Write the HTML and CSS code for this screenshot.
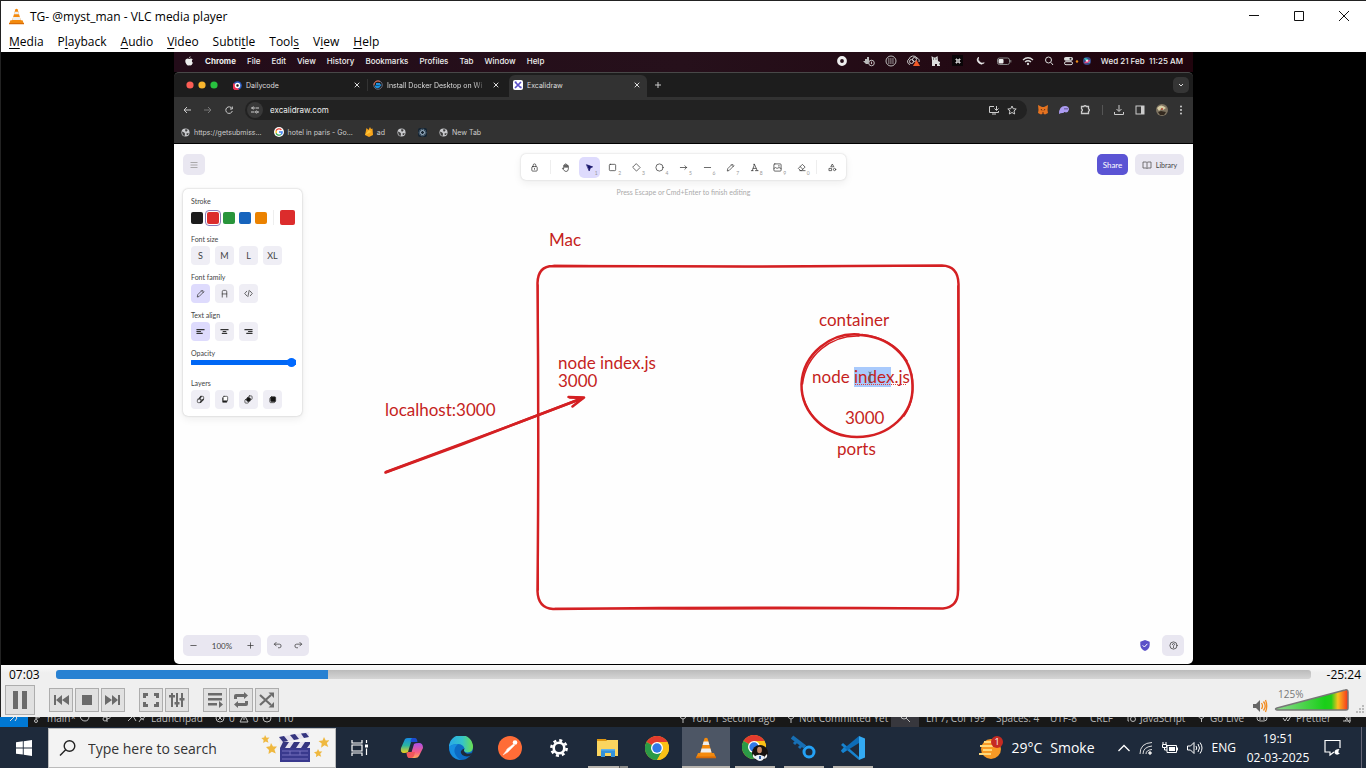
FILE: index.html
```html
<!DOCTYPE html>
<html lang="en">
<head>
<meta charset="utf-8">
<title>TG- @myst_man - VLC media player</title>
<link rel="stylesheet" href="styles.css">
</head>
<body>
<svg class="defs" width="0" height="0" aria-hidden="true">
  <symbol id="cone" viewBox="0 0 20 22"><path d="M2 16h16l2 5H0z" fill="#f08a10"/><path d="M8.400 1.500Q10 0 11.600 1.500L16 17Q10 20 4 17z" fill="#f58a0c"/><path d="M7.600 4.500h4.800l1 3.500H6.600zM5.600 11.500h8.800l1.100 4H4.500z" fill="#eee"/><path d="M0 19.500h20l.2 1.800H0z" fill="#d96b05"/></symbol>
  <symbol id="close" viewBox="0 0 8 8"><path d="M1.700 1.700l4.600 4.600M6.300 1.700L1.700 6.300" stroke="#ddd"/></symbol>
  <symbol id="globe" viewBox="0 0 10 10"><circle cx="5" cy="5" r="4.500" fill="#c8c9cc"/><path d="M1 4l2.500 1 1 1.500L4 9 2 8zM5 1.200L7.500 2 6.500 4 4.500 3.500zM6 6l2.500-.5L8 7.500 6.500 8z" fill="#3c3c3c"/></symbol>
  <symbol id="chrome" viewBox="0 0 24 24"><circle cx="12" cy="12" r="12" fill="#fbc116"/><path d="M12 12L1.600 6A12 12 0 0 1 22.400 6H12z" fill="#e33b2e"/><path d="M1.600 6A12 12 0 0 0 12 24l5.200-9L12 12z" fill="#2b9a47"/><path d="M12 6h10.400A12 12 0 0 1 12 24l5.200-9z" fill="#fbc116"/><circle cx="12" cy="12" r="6" fill="#fff"/><circle cx="12" cy="12" r="4.700" fill="#3079e8"/></symbol>
</svg>

<main class="player">
  <header class="titlebar">
    <svg class="cone-small" width="15" height="17"><use href="#cone"/></svg>
    <h1>TG- @myst_man - VLC media player</h1>
    <div class="window-buttons">
      <button aria-label="Minimize"><svg width="12" height="12"><path d="M1 5.500h10"/></svg></button>
      <button aria-label="Maximize"><svg width="12" height="12"><path d="M1.500 1.500h9v9h-9z"/></svg></button>
      <button aria-label="Close"><svg width="12" height="12"><path d="M1 1l10 10M11 1L1 11"/></svg></button>
    </div>
  </header>
  <nav class="menubar">
    <button><u>M</u>edia</button><button>P<u>l</u>ayback</button><button><u>A</u>udio</button><button><u>V</u>ideo</button><button>Subti<u>t</u>le</button><button>Tool<u>s</u></button><button>V<u>i</u>ew</button><button><u>H</u>elp</button>
  </nav>

  <section class="video">
    <div class="frame">
      <div class="mac-bar">
        <svg width="10" height="10" viewBox="0 0 10 10" fill="#eee"><path d="M6.700.3Q6.600 1.900 5 2.300 5 .9 6.700.3zM5.200 2.900q2.300-1 3.500.6-1.800 1.400.2 3.300Q7.500 10.500 5.200 9.300 3.600 10.200 2.300 8 .2 4.300 2.300 3q1.400-.8 2.900-.1z"/></svg>
        <b>Chrome</b><span>File</span><span>Edit</span><span>View</span><span>History</span><span>Bookmarks</span><span>Profiles</span><span>Tab</span><span>Window</span><span>Help</span>
        <div class="mac-status">
          <svg class="record" width="12" height="12"><circle cx="6" cy="6" r="3.400" fill="none" stroke="#eee" stroke-width="3"/></svg>
          <svg width="12" height="12"><path d="M0 6h7l2-1v4H3zM2 4h2v2H2zM4 2h2v4H4z" fill="#bbb"/><circle cx="8.500" cy="8" r="2.800" fill="#33111c" stroke="#bbb"/><path d="M8.500 6.700V9" stroke="#bbb"/></svg>
          <svg width="12" height="12" fill="none" stroke="#bbb"><circle cx="6" cy="6" r="5"/><path d="M3 4h6M3 6h6M3 8h6" stroke-dasharray="1.500 .6"/></svg>
          <svg width="13" height="12"><path d="M3 9.500a3 3 0 0 1-1-5.500 4.500 4.500 0 0 1 8-1 3 3 0 0 1 2 4" fill="none" stroke="#ccc"/><circle cx="4.500" cy="6.500" r="2" fill="none" stroke="#ccc"/><circle cx="7.500" cy="4.500" r="2" fill="none" stroke="#ccc"/><path d="M9.500 5l3.500 6H6z" fill="#f05a28"/></svg>
          <svg width="12" height="12"><path d="M2 11V5L1.500 1l2 1.500h2L7.500 1 8 6l2 1v4H7V9H5v2z" fill="#ddd"/><path d="M3 4h1M5.500 4h1M9 9h1" stroke="#222"/></svg>
          <svg width="12" height="12"><rect width="11" height="11" fill="#0a0508"/><path d="M5 5h2v2H5zM5 5H4V4h1zM7 5V4h1v1zM5 7v1H4V7zM7 7h1v1H7z" fill="none" stroke="#ddd"/></svg>
          <svg width="12" height="12"><path d="M4.500 2a4 4 0 1 0 5.800 5.800A4.500 4.500 0 0 1 4.500 2z" fill="#eee" stroke="#eee" stroke-width=".6"/></svg>
          <svg width="16" height="12"><rect x="1.500" y="3" width="12" height="6.500" rx="2" fill="none" stroke="#888"/><rect x="2.500" y="4" width="5" height="4.500" rx="1" fill="#eee"/><path d="M14.800 5v2.500" stroke="#888"/></svg>
          <svg width="12" height="12" fill="none" stroke="#ddd" stroke-width="1.300"><path d="M1 5Q6 .5 11 5M3 7q3-2.500 6 0"/><circle cx="6" cy="9" r=".5"/></svg>
          <svg width="10" height="12" fill="none" stroke="#ddd"><circle cx="4.500" cy="5" r="3"/><path d="M7 7.500l2 2.500"/></svg>
          <svg width="15" height="12"><rect y="2" width="9" height="3.700" rx="1.800" fill="#ddd"/><rect x=".5" y="6.700" width="8" height="3" rx="1.500" fill="none" stroke="#ddd"/><circle cx="6.500" cy="3.800" r="1" fill="#222"/><circle cx="13" cy="6.500" r="1.200" fill="#e88a1a"/></svg>
          <svg class="siri" width="12" height="12"><circle cx="6" cy="6" r="4" fill="#364a87"/><path d="M3 3q5 0 6 5-4 0-6-5z" fill="#3cc3c0"/><path d="M3 8q3-4 6-3-1 4-6 3z" fill="#e04a85"/><circle cx="6" cy="5.800" r="1" fill="#fff"/></svg>
          <time>Wed 21 Feb&nbsp; 11:25 AM</time>
        </div>
      </div>

      <div class="browser">
        <div class="tabs">
          <svg width="32" height="8"><circle cx="4" cy="4" r="3.600" fill="#fb5d55"/><circle cx="16" cy="4" r="3.600" fill="#f9b62d"/><circle cx="28" cy="4" r="3.600" fill="#28c13f"/></svg>
          <div class="tab first"><svg width="9" height="9"><circle cx="4.500" cy="4.500" r="4.300" fill="#295bc0"/><path d="M1 2a4 4 0 0 0 5 6.500z" fill="#ed3356"/><circle cx="4.500" cy="4.500" r="2" fill="#181818" stroke="#fff" stroke-width="1.500"/></svg><span>Dailycode</span><button aria-label="Close tab"><svg width="8" height="8"><use href="#close"/></svg></button></div>
          <div class="tab second"><svg width="10" height="10"><circle cx="5" cy="5" r="4.300" fill="none" stroke="#667" /><path d="M1 5a4 4 0 0 1 6-3.500" fill="none" stroke="#e7694a"/><path d="M1.500 5.500h5l1-1.500 1 1-1 1Q6.500 8.500 4 8.300 2 8 1.500 5.500z" fill="#1d91dd"/><path d="M3 4h4" stroke="#1d91dd" stroke-width="2"/></svg><span>Install Docker Desktop on Wi</span><button aria-label="Close tab"><svg width="8" height="8"><use href="#close"/></svg></button></div>
          <div class="tab active"><svg width="10" height="10"><rect width="10" height="10" rx="2" fill="#fff"/><path d="M2 2l6 6M8 2L2 8" stroke="#5b50c8" stroke-width="1.700"/><path d="M1.500 1.500h2v2zM6.500 6.500h2v2z" fill="#5b50c8"/></svg><span>Excalidraw</span><button aria-label="Close tab"><svg width="8" height="8"><use href="#close"/></svg></button></div>
          <button class="new-tab" aria-label="New tab"><svg width="8" height="8" stroke="#ccc"><path d="M4 1v6M1 4h6"/></svg></button>
          <button class="tab-search" aria-label="Search tabs"><svg width="8" height="8" fill="none" stroke="#ddd"><path d="M2 3l2 2 2-2"/></svg></button>
        </div>
        <div class="address-row">
          <button aria-label="Back"><svg width="10" height="10" fill="none" stroke="#ccc"><path d="M9 5H2M5 2L2 5l3 3"/></svg></button>
          <button aria-label="Forward"><svg width="10" height="10" fill="none" stroke="#777"><path d="M1 5h7M5 2l3 3-3 3"/></svg></button>
          <button aria-label="Reload"><svg width="10" height="10" fill="none" stroke="#ccc"><path d="M8 3.500A3.300 3.300 0 1 0 8.300 6M8.300 1.500V4H6"/></svg></button>
          <div class="address">
            <span class="site-info"><svg width="8" height="8" fill="none" stroke="#ccc"><path d="M4.500 2H8M0 2h1M0 6h3.500M7 6h1"/><circle cx="2.300" cy="2" r="1"/><circle cx="5.500" cy="6" r="1"/></svg></span>
            <input type="text" value="excalidraw.com" aria-label="Address">
            <svg width="12" height="10" fill="none" stroke="#ccc"><path d="M6 1.500H1.500V7.500h9V6M4 9h4M8.500 1v4M6.500 3.500l2 2 2-2"/></svg>
            <svg width="10" height="10" viewBox="0 0 10 10" fill="none" stroke="#ccc"><path d="M5 1l1.200 2.700 3 .3L7 6l.7 3L5 7.500 2.300 9 3 6 .8 4l3-.3z"/></svg>
          </div>
          <div class="extensions">
            <svg width="10" height="10"><path d="M0 0l4 2h2l4-2-.5 5L10 8 7 9.500 5 8.500 3 9.500 0 8l.5-3z" fill="#e57320"/><path d="M3 4l1 1.500M7 4L6 5.500M4 8h2" stroke="#623017"/></svg>
            <svg width="10" height="10"><path d="M0 9Q0 1 6 1q4 0 4 3.500Q9.500 7 7 7.500 5 6.500 4.500 8 2 7.500 0 9z" fill="#ac9cf2"/><path d="M6 3v1.500M8 3v1.500" stroke="#44376d"/></svg>
            <svg width="11" height="11" fill="none" stroke="#ccc" stroke-width="1.300"><path d="M1.500 2.500h2.300a1.300 1.300 0 0 1 2.500 0H8.500v2.300a1.300 1.300 0 0 1 0 2.500V9.500h-7V7.300a1.300 1.300 0 0 0 0-2.500z"/></svg>
            <i></i>
            <svg width="10" height="10" fill="none" stroke="#ccc"><path d="M5 0v6M2.500 4L5 6.500 7.500 4M.5 7v2.500h9V7"/></svg>
            <svg width="10" height="10"><rect x="1" y="1" width="8" height="8" fill="none" stroke="#ccc"/><path d="M6 1h3v8H6z" fill="#ccc"/></svg>
            <svg width="12" height="12"><circle cx="6" cy="6" r="6" fill="#7d7361"/><path d="M1 4q4-5 9 0l-3 2-2-1-2 2z" fill="#d8cda5"/><path d="M2 8l3-1 5 1-2 3H4z" fill="#33291f"/><circle cx="6" cy="5" r="1" fill="#a83b2d"/></svg>
            <svg width="4" height="10" fill="#ddd"><circle cx="2" cy="1.500" r=".9"/><circle cx="2" cy="5" r=".9"/><circle cx="2" cy="8.500" r=".9"/></svg>
          </div>
        </div>
        <div class="bookmarks">
          <a href="#"><svg width="9" height="9"><use href="#globe"/></svg>https://getsubmiss...</a>
          <a href="#"><svg width="10" height="10"><circle cx="5" cy="5" r="5" fill="#fff"/><path d="M7.400 2.800A3.200 3.200 0 0 0 2.100 3.800" fill="none" stroke="#e74435" stroke-width="1.300"/><path d="M2.100 3.800v2.400" stroke="#fbbc05" stroke-width="1.300"/><path d="M2.100 6.200A3.200 3.200 0 0 0 7 7.500" fill="none" stroke="#34a853" stroke-width="1.300"/><path d="M7 7.500A3 3 0 0 0 8.200 5H5" fill="none" stroke="#4285f4" stroke-width="1.300"/></svg>hotel in paris - Go...</a>
          <a href="#"><svg width="8" height="10"><path d="M0 8L1.500 1l2 2L5 0l1 2 1.500-.5L8 8 4 10z" fill="#f7a51b"/><path d="M0 8l4-5 2 2z" fill="#ffca3c"/></svg>ad</a>
          <a href="#" aria-label="Site"><svg width="9" height="9"><use href="#globe"/></svg></a>
          <a href="#" aria-label="Settings"><svg width="9" height="9"><rect width="9" height="9" rx="2" fill="#152432"/><circle cx="4.500" cy="4.500" r="2" fill="none" stroke="#b5cce0"/><circle cx="4.500" cy="4.500" r="3.300" fill="none" stroke="#9fb8cd" stroke-dasharray="1 1"/></svg></a>
          <a href="#"><svg width="9" height="9"><use href="#globe"/></svg>New Tab</a>
        </div>
      </div>

      <div class="board">
        <svg class="drawing" viewBox="174 144 1019 520" preserveAspectRatio="xMidYMin meet">
          <g fill="none" stroke="#d42023" stroke-width="2.500" stroke-linecap="round" stroke-linejoin="round">
            <path d="M553 266Q640 266 745 266.500L942 265.600Q958 266 958.500 284Q959 440 958 591Q958 607 943 608.500Q750 607 553 609Q538 608 537.500 591Q539 440 537.500 283Q538 266 553 266"/>
            <path d="M554 265.400L745 266.600 940 266M957.800 286L958.600 590M940 608.400L690 609 555 608.300M538.400 590L538 285" stroke-width="1.300"/>
            <path d="M859 334.500C831 332 803 354 801.500 384C801 414 827 437 857 437C889 437 914 414 912.500 385C912 356 889 336 857 334.800"/>
            <path d="M859 336C831 335 806 355 802.500 384M862 334.500Q893 338 907 361M911.500 374Q916 399 904 416M803 397Q811 424 838 434" stroke-width="1.600"/>
            <path d="M385.500 472.500L463 444 584 397.500M568.500 397L584 397.500 572.500 406.500"/>
            <path d="M386 472L520 422 582 398.500M570 397.500L583 398"/>
          </g>
          <g class="labels">
            <text x="549" y="246">Mac</text>
            <text x="819" y="326">container</text>
            <text x="558" y="369">node index.js</text>
            <text x="558" y="387">3000</text>
            <text x="385" y="416">localhost:3000</text>
            <rect x="854" y="367" width="37" height="20" fill="#a9cafc"/>
            <text x="812" y="383">node index.js</text>
            <path d="M855 384.500h52" stroke="#e04040" stroke-dasharray="1 1"/>
            <path d="M868.500 372q1.500 0 1.500 1.500v8q0 1.500-1.500 1.500M871.500 372q-1.500 0-1.500 1.500v8q0 1.500 1.500 1.500" fill="none" stroke="#555" stroke-width=".8"/>
            <text x="845" y="424">3000</text>
            <text x="837" y="455">ports</text>
          </g>
        </svg>

        <div class="board-ui">
          <div class="board-top">
            <button class="soft square" aria-label="Menu"><svg width="10" height="10" stroke="#999"><path d="M1.500 2.500h7M1.500 5h7M1.500 7.500h7" stroke-width=".8"/></svg></button>
            <div class="tool-column">
              <div class="tools">
                <button aria-label="Lock"><svg viewBox="0 0 10 10"><rect x="2" y="4" width="6" height="5" rx="1"/><path d="M3.500 4V2.500a1.500 1.500 0 0 1 3 0V4M5 6v1"/></svg></button>
                <i></i>
                <button aria-label="Hand"><svg viewBox="0 0 10 10"><path d="M3 6V2.500q.7-1 1.300 0V5 1.500q.7-1 1.300 0V5 2q.7-1 1.300 0v3-2q.8-1 1.300 0v3.500Q8 9.500 5.500 9.500 3.500 9 1.500 6 2 4.800 3 6"/></svg></button>
                <button class="selected" aria-label="Selection"><svg viewBox="0 0 10 10"><path d="M2 2l6.500 2.300-2.600 1.200L4.800 8.500z" fill="#18156b" stroke="#18156b"/></svg><sub>1</sub></button>
                <button aria-label="Rectangle"><svg viewBox="0 0 10 10"><rect x="1.500" y="1.500" width="7" height="7" rx="1"/></svg><sub>2</sub></button>
                <button aria-label="Diamond"><svg viewBox="0 0 10 10"><path d="M5 1l4 4-4 4-4-4z"/></svg><sub>3</sub></button>
                <button aria-label="Ellipse"><svg viewBox="0 0 10 10"><circle cx="5" cy="5" r="4"/></svg><sub>4</sub></button>
                <button aria-label="Arrow"><svg viewBox="0 0 10 10"><path d="M1.500 5h7M6.500 3l2 2-2 2"/></svg><sub>5</sub></button>
                <button aria-label="Line"><svg viewBox="0 0 10 10"><path d="M1.500 5h7"/></svg><sub>6</sub></button>
                <button aria-label="Draw"><svg viewBox="0 0 10 10"><path d="M1.500 8.500l.5-2.300 5-5 1.800 1.800-5 5zM6 2l2 2"/></svg><sub>7</sub></button>
                <button aria-label="Text"><svg viewBox="0 0 10 10"><path d="M1.500 8.500h2M6 8.500h3M2.500 8.500L5 1.500l3 7M3.500 6h3.300M4 1.500h1"/></svg><sub>8</sub></button>
                <button aria-label="Image"><svg viewBox="0 0 10 10"><rect x="1" y="1" width="8" height="8" rx="1"/><path d="M1 6q2-2 3.500 0 2-2 4.500 0M6 3.200h1"/></svg><sub>9</sub></button>
                <button aria-label="Eraser"><svg viewBox="0 0 10 10"><path d="M4 8.500L1.500 6l4.500-4.500L9 4.500l-4 4H3M3.500 4l3 3M5 8.500h4"/></svg><sub>0</sub></button>
                <i></i>
                <button aria-label="More tools"><svg viewBox="0 0 10 10"><path d="M5 1.500l1.500 2.700h-3zM1.500 6H4v2.500H1.500z"/><circle cx="7.300" cy="7.200" r="1.300"/></svg></button>
              </div>
              <p>Press Escape or Cmd+Enter to finish editing</p>
            </div>
            <div class="board-actions">
              <button class="share">Share</button>
              <button class="soft library"><svg width="10" height="10" fill="none" stroke="#555" stroke-width=".8"><path d="M1 2h3.500l.5.500.5-.5H9v6H5.500L5 8.500 4.500 8H1zM5 2.500v6"/></svg>Library</button>
            </div>
          </div>

          <aside class="panel">
            <fieldset><legend>Stroke</legend>
              <div class="swatches"><button class="black" aria-label="Black"></button><button class="red picked" aria-label="Red"></button><button class="green" aria-label="Green"></button><button class="blue" aria-label="Blue"></button><button class="orange" aria-label="Orange"></button><i></i><button class="red current-colour" aria-label="Current colour"></button></div>
            </fieldset>
            <fieldset><legend>Font size</legend>
              <div class="options"><button>S</button><button>M</button><button>L</button><button>XL</button></div>
            </fieldset>
            <fieldset><legend>Font family</legend>
              <div class="options"><button class="selected" aria-label="Hand-drawn"><svg viewBox="0 0 10 10"><path d="M1.500 8.500l.5-2.300 5-5 1.800 1.800-5 5zM6 2l2 2"/></svg></button><button aria-label="Normal"><svg viewBox="0 0 10 10"><path d="M2.500 9V3q0-1.500 1.500-1.500h2Q7.500 1.500 7.500 3v6M2.500 5.500h5"/></svg></button><button aria-label="Code"><svg viewBox="0 0 10 10"><path d="M3 2.500L.8 5 3 7.500M7 2.500L9.200 5 7 7.500M5.800 1.500l-1.500 7"/></svg></button></div>
            </fieldset>
            <fieldset><legend>Text align</legend>
              <div class="options bold"><button class="selected" aria-label="Left"><svg viewBox="0 0 10 10"><path d="M1 3h8M1 5h4M1 7h6"/></svg></button><button aria-label="Center"><svg viewBox="0 0 10 10"><path d="M1 3h8M3.500 5h3M2.500 7h5"/></svg></button><button aria-label="Right"><svg viewBox="0 0 10 10"><path d="M1 3h8M5 5h4M3 7h6"/></svg></button></div>
            </fieldset>
            <div class="opacity"><label for="opacity">Opacity</label><input id="opacity" type="range" value="100"></div>
            <fieldset><legend>Layers</legend>
              <div class="options"><button aria-label="Send to back"><svg viewBox="0 0 10 10"><rect x="4.500" y="1.500" width="4" height="4" rx="1"/><rect x="1.500" y="4.500" width="4" height="4" rx="1"/><path d="M4 3.500L5.500 2M5 8l3-3" stroke-width="1.600"/></svg></button><button aria-label="Send backward"><svg viewBox="0 0 10 10"><path d="M3 3.500V8h4.500L8 6H4V3z" fill="#111"/><rect x="3.500" y="1.500" width="5" height="5" rx="1" fill="#fff"/></svg></button><button aria-label="Bring forward"><svg viewBox="0 0 10 10"><rect x="5" y="1" width="4" height="4" rx="1"/><rect x="1" y="5" width="4" height="4" rx="1"/><rect x="3" y="3" width="4" height="4" rx="1" fill="#111"/></svg></button><button aria-label="Bring to front"><svg viewBox="0 0 10 10"><rect x="2" y="3" width="5.500" height="5.500" rx="1"/><rect x="3" y="2" width="5.500" height="5.500" rx="1" fill="#111"/></svg></button></div>
            </fieldset>
          </aside>

          <footer class="board-footer">
            <div class="soft zoom"><button aria-label="Zoom out"><svg viewBox="0 0 10 10"><path d="M2 5h6"/></svg></button><button>100%</button><button aria-label="Zoom in"><svg viewBox="0 0 10 10"><path d="M2 5h6M5 2v6"/></svg></button></div>
            <div class="soft history"><button aria-label="Undo"><svg viewBox="0 0 10 10"><path d="M3.500 1.500l-2 2 2 2M1.500 3.500H7a2 2 0 0 1 0 4H6"/></svg></button><button aria-label="Redo"><svg viewBox="0 0 10 10"><path d="M6.500 1.500l2 2-2 2M8.500 3.500H3a2 2 0 0 0 0 4h1"/></svg></button></div>
            <svg class="shield" width="10" height="11"><path d="M5 0l4.700 1.800V5Q9.500 9 5 11 .5 9 .3 5V1.800z" fill="#5b50c8"/><path d="M2.700 5.300l1.700 1.700 3-3.200" fill="none" stroke="#fff"/></svg>
            <button class="soft square" aria-label="Help"><svg viewBox="0 0 10 10"><circle cx="5" cy="5" r="4"/><path d="M3.800 4q0-1.200 1.200-1.200T6.200 4Q6 4.700 5 5.200V6M5 7v.5"/></svg></button>
          </footer>
        </div>
      </div>
    </div>
  </section>

  <section class="controls">
    <div class="seek-row"><time>07:03</time><input class="seek" type="range" min="0" max="1000" value="217" aria-label="Position"><time>-25:24</time></div>
    <div class="button-row">
      <button class="pause" aria-label="Pause"><svg width="18" height="20" viewBox="0 0 18 20"><path d="M2 1h5v18H2zM11 1h5v18h-5z"/></svg></button>
      <div class="group">
        <button aria-label="Previous"><svg viewBox="0 0 18 18"><path d="M2 4h2v10H2zM10 4v10L4 9zM17 4v10l-7-5z"/></svg></button>
        <button aria-label="Stop"><svg viewBox="0 0 18 18"><path d="M4 4h10v10H4z"/></svg></button>
        <button aria-label="Next"><svg viewBox="0 0 18 18"><path d="M1 4v10l7-5zM8 4v10l6-5zM14 4h2v10h-2z"/></svg></button>
      </div>
      <div class="group">
        <button aria-label="Fullscreen"><svg viewBox="0 0 18 18"><path d="M1 2h5v3H4v2H1zM12 2h5v5h-3V5h-2zM1 11h3v2h2v3H1zM14 11h3v5h-5v-3h2z"/></svg></button>
        <button aria-label="Extended settings"><svg viewBox="0 0 18 18"><path d="M3 2h2v14H3zM1 4h6v2.500H1zM8 2h2v14H8zM6.500 11h5v2.500h-5zM13 2h2v14h-2zM11.500 7h5v2.500h-5z"/></svg></button>
      </div>
      <div class="group">
        <button aria-label="Playlist"><svg viewBox="0 0 18 18"><path d="M2 2h14v2.500H2zM2 7h14v2.500H2zM2 12h9v2.500H2zM13 10l4 3.500-4 3.500z"/></svg></button>
        <button aria-label="Loop"><svg viewBox="0 0 18 18"><path d="M2 8V5q0-2 2-2h8V1l4 3.500L12 8V6H5v2zM16 10v3q0 2-2 2H6v2l-4-3.500L6 10v2h7v-2z"/></svg></button>
        <button aria-label="Shuffle"><svg viewBox="0 0 18 18"><path d="M2 4l11 10M2 14L13 4" fill="none" stroke="#6b6b6b" stroke-width="2.200"/><path d="M10.500 1.500H16V7zM10.500 16.500H16V11z"/></svg></button>
      </div>
      <div class="volume">
        <svg width="16" height="14"><path d="M1 5h3l4-4v12L4 9H1z" fill="#666"/><path d="M9.500 4q2 3 0 6M11.500 2.500q3.500 4.500 0 9M13.500 1q2.500 6 0 12" fill="none" stroke="#f28b20" stroke-width="1.300"/></svg>
        <svg width="76" height="26"><defs><linearGradient id="vol"><stop offset="0" stop-color="#8fd98f"/><stop offset=".68" stop-color="#19cf19"/><stop offset=".77" stop-color="#22cf19"/><stop offset=".86" stop-color="#fbc01e"/><stop offset="1" stop-color="#f5331d"/></linearGradient></defs><path d="M3 21L71 3q3-1 3 2v16q0 2-2 2H3q-3-1 0-2z" fill="url(#vol)" stroke="#777" stroke-width="1.500"/><text x="4" y="11">125%</text></svg>
        <svg width="8" height="8" fill="#bbb"><path d="M6 0h2v2H6zM3 3h2v2H3zM6 3h2v2H6zM0 6h2v2H0zM3 6h2v2H3zM6 6h2v2H6z"/></svg>
      </div>
    </div>
  </section>
</main>

<section class="editor-status">
  <span class="remote"><svg width="12" height="10" fill="none" stroke="#ddd"><path d="M2 8l4-4M6 2l3 3-2 3"/></svg></span>
  <span class="branch"><svg width="9" height="12" fill="none" stroke="#bbb"><circle cx="2" cy="9" r="1.500"/><path d="M2 7V2M2 6q5 0 5-3"/></svg>main*</span>
  <span class="sync"><svg width="11" height="12" fill="none" stroke="#bbb"><path d="M1 4q1 5 5 5t4-5"/></svg></span>
  <span class="rocket"><svg width="11" height="12" fill="none" stroke="#bbb"><circle cx="3" cy="7" r="2"/><path d="M5 10V3h3q2 3-3 4"/></svg></span>
  <span class="launch"><svg width="20" height="12" fill="none" stroke="#bbb"><path d="M1 9l5-5 3 5M12 10l2-3q4 0 5-5M12 3q1 4 5 5"/></svg>Launchpad</span>
  <span class="problems"><svg width="10" height="12" fill="none" stroke="#bbb"><circle cx="5" cy="6" r="4"/><path d="M3 4l4 4M7 4L3 8"/></svg>0<svg width="10" height="12" fill="none" stroke="#bbb"><path d="M5 2l4 8H1zM5 5v3"/></svg>0<svg width="10" height="12" fill="none" stroke="#bbb"><circle cx="5" cy="6" r="4"/><path d="M5 3v4"/></svg>110</span>
  <span class="blame"><svg width="8" height="12" fill="none" stroke="#bbb"><path d="M1 3q0 4 3 4t3-4M4 7v4"/></svg>You, 1 second ago</span>
  <span class="commit"><svg width="8" height="12" fill="none" stroke="#bbb"><path d="M1 3q0 4 3 4t3-4M4 7v4"/></svg>Not Committed Yet</span>
  <span class="find"><svg width="10" height="12" fill="none" stroke="#bbb"><circle cx="4" cy="4" r="3"/><path d="M6 6l4 4"/></svg></span>
  <span class="cursor">Ln 7, Col 199</span><span class="spaces">Spaces: 4</span><span class="encoding">UTF-8</span><span class="eol">CRLF</span>
  <span class="language"><svg width="10" height="12" fill="none" stroke="#bbb"><path d="M2 4v5h1"/><circle cx="7" cy="7" r="2.500"/></svg>JavaScript</span>
  <span class="live"><svg width="9" height="12" fill="none" stroke="#bbb"><path d="M1 4q3 5 7 0M4.500 6v4"/></svg>Go Live</span>
  <span class="copilot"><svg width="12" height="12" fill="none" stroke="#bbb"><rect x="1" y="3" width="10" height="6" rx="3"/><path d="M4 5v3M8 5v3"/></svg></span>
  <span class="prettier"><svg width="10" height="12" fill="none" stroke="#bbb"><path d="M1 6l2 3 3-5M5 8l1 1 3-5"/></svg>Prettier</span>
  <span class="bell"><svg width="10" height="12" fill="none" stroke="#bbb"><path d="M1 9h8M3 9l5-6M8 5v4M2 3l6 8"/></svg></span>
</section>

<footer class="taskbar">
  <button class="start" aria-label="Start"><svg width="16" height="16" fill="#fff"><path d="M0 2.300l6.800-1v6.200H0zM7.700 1.200L16 0v7.500H7.700zM0 8.400h6.800v6.200L0 13.700zM7.700 8.400H16V16l-8.300-1.200z"/></svg></button>
  <label class="search">
    <svg width="18" height="18" fill="none" stroke="#222" stroke-width="1.400"><circle cx="10.500" cy="7" r="5.300"/><path d="M6.700 10.800L1 16.500"/></svg>
    <input type="text" placeholder="Type here to search" aria-label="Search">
    <svg width="68" height="34" viewBox="0 0 68 34"><g fill="#efb83f"><path d="M4 4l1.500 2.700 3-.3-2 2.300 1 3-2.800-1.300L2.200 12l.4-3L.3 7l2.900-.5z"/><path d="M10 12l2 3.600 4-.2-2.600 3 1.400 4-3.900-1.700-3.400 2.400.5-4.200L5 16l4-.7zM63 6l1.700 3.500 3.900-.3-2.800 2.900 1.500 3.900-3.800-1.700-3.400 2.400.6-4.100L57.500 10l4-.6zM57 18l1.300 2.600 3 0-2.100 2.200 1 3-2.800-1.300-2.500 1.700.4-3-2.300-2 2.900-.6z"/></g><path d="M18 6L48 1v5L19 12z" fill="#e5e1ee"/><path d="M18 6l5-1 4 5-5 1zM29 4l5-1 4 5-5 1zM40 2.500l5-.5 3 4-5 1z" fill="#35357f"/><path d="M19 11h30v20H19z" fill="#39398d"/><path d="M19 11h30v6H19z" fill="#e5e1ee"/><path d="M22 11h6l-4 6h-5zM33 11h6l-4 6h-6zM44 11h5v2l-3 4h-6z" fill="#35357f"/><path d="M21 20h26M21 24h26M29 20v4M39 20v4M21 28h26" stroke="#7771bd"/></svg>
  </label>
  <nav class="apps">
    <button aria-label="Task view"><svg width="18" height="18" fill="none" stroke="#fff" stroke-width="1.200"><path d="M1 1v3h10V1M1 17v-3h10v3M1 6h10v6H1zM15.500 1v3M15.500 9.500V16"/><path d="M14 5.500h3v3h-3z" fill="#fff" stroke="none"/></svg></button>
    <button aria-label="Copilot"><svg width="24" height="24" viewBox="0 0 24 24"><defs><linearGradient id="ca" x2="0" y2="1"><stop stop-color="#178ce5"/><stop offset=".5" stop-color="#2bb5a0"/><stop offset="1" stop-color="#f2d318"/></linearGradient><linearGradient id="cb" x2="0" y2="1"><stop stop-color="#a951ec"/><stop offset=".6" stop-color="#f45c87"/><stop offset="1" stop-color="#ffac58"/></linearGradient></defs><path d="M5 3Q6 2 8 2h7q-3 0-4 4L8 16q-1 1-4 1-4 0-3-5z" fill="url(#ca)"/><path d="M12 2h3q2 0 2.500 4h-7q0-3 1.500-4z" fill="#1b4bd0"/><path d="M19 20q-1 2-4 2H8q2 0 3-4l3-10q1-1 5-1t4 5z" fill="url(#cb)"/><path d="M8 16h7l-1 4q-1 2-3 2H9q-2 0-2.500-5z" fill="#f0575b"/></svg></button>
    <button aria-label="Edge"><svg width="24" height="24" viewBox="0 0 24 24"><defs><linearGradient id="ea"><stop stop-color="#28a9e8"/><stop offset=".55" stop-color="#35c4c9"/><stop offset="1" stop-color="#6be04f"/></linearGradient></defs><circle cx="12" cy="12" r="12" fill="#0c6bc4"/><path d="M0 11A12 12 0 0 1 24 11q0 5-5.500 5.500-5-.5-3-4Q14 8 9 8q-6 0-9 3z" fill="url(#ea)"/><path d="M0 11q3-3 9-3-4 3-3.500 8 1 5 6.500 8-11-1-12-13z" fill="#178ee0"/><path d="M15.500 12.500q-2 3.500 2.500 5.200 3 .5 5-1.200l-.7 2.700q-5 2.500-9-.2-4-4 2.200-6.500z" fill="#1e2a3b"/></svg></button>
    <button aria-label="Postman"><svg width="24" height="24"><circle cx="12" cy="12" r="12" fill="#ff6c37"/><circle cx="17" cy="6.500" r="2.300" fill="#fff"/><path d="M15.500 8L9 13l-1 2-3 4 5-3 1.500-1.500L17 9z" fill="#fff" stroke="#ffd5c4" stroke-width=".6"/></svg></button>
    <button aria-label="Settings"><svg width="18" height="18" fill="none" stroke="#fff"><circle cx="9" cy="9" r="5.300" stroke-width="2.600"/><circle cx="9" cy="9" r="7.600" stroke-width="2.600" stroke-dasharray="3 2.970"/></svg></button>
    <button class="running multi" aria-label="File Explorer"><svg width="22" height="20"><path d="M0 2h21v16H0z" fill="#fbd55f"/><path d="M0 1h9l1 2H0z" fill="#df9812"/><path d="M4 19v-8h14v8h-4v-4H8v4z" fill="#3492da"/><path d="M4 11h14v1.500H4z" fill="#61b3ec"/></svg></button>
    <button aria-label="Chrome"><svg width="24" height="24"><use href="#chrome"/></svg></button>
    <button class="running current" aria-label="VLC media player"><svg width="20" height="22"><use href="#cone"/></svg></button>
    <button class="running" aria-label="Chrome profile"><svg width="26" height="26" viewBox="0 0 26 26"><svg width="24" height="24"><use href="#chrome"/></svg><circle cx="18" cy="18" r="8" fill="#17120f"/><path d="M11 19q2 1 3 5-4-1-3-5zM25 19q-2 1-3 5 4-1 3-5z" fill="#f3f1ee"/><ellipse cx="17.500" cy="15" rx="2.400" ry="3.200" fill="#c88967"/><path d="M12 22q5-4.500 11 0-2 4-5 4t-6-4z" fill="#e8f0fb"/><path d="M18 21v3" stroke="#3261a4" stroke-width="2"/></svg></button>
    <button class="running" aria-label="Key tool"><svg width="26" height="26" fill="none"><circle cx="18" cy="17" r="5" stroke="#24a1f5" stroke-width="3"/><path d="M1 2l13 10" stroke="#176fb4" stroke-width="4"/><path d="M3 9l4-4M8 13l4-4" stroke="#176fb4" stroke-width="3"/></svg></button>
    <button class="running" aria-label="Visual Studio Code"><svg width="24" height="24" viewBox="0 0 24 24"><path d="M2 7l16 14V24L0 9z" fill="#1783cf"/><path d="M2 17l-2-2L18 0v7z" fill="#0d6cb7"/><path d="M0 14.500L2 17l4-3-3-3z" fill="#1783cf"/><path d="M18 0l6 2.500v19L18 24z" fill="#33a9f2"/></svg></button>
  </nav>
  <div class="tray">
    <button class="weather"><svg width="24" height="24" viewBox="0 0 24 24"><circle cx="12" cy="13" r="10" fill="#f89a25"/><path d="M5 6h8M1 10h15M4 14h9M0 18h12" stroke="#ffd879" stroke-width="2"/><circle cx="18" cy="6" r="6" fill="#c62b22"/><text x="18" y="9">1</text></svg><span>29°C</span><span>Smoke</span></button>
    <button aria-label="Hidden icons"><svg width="12" height="8" fill="none" stroke="#fff" stroke-width="1.300"><path d="M.5 7L6 1.500 11.500 7"/></svg></button>
    <button aria-label="Wi-Fi"><svg width="14" height="14" fill="none" stroke="#ddd"><path d="M1 13Q1 2 13 1.500M4 13q0-7 9-8M7 13q0-4 6-4.500"/><circle cx="11" cy="12" r="1.300" fill="#fff"/></svg></button>
    <button aria-label="Battery"><svg width="16" height="14" fill="none" stroke="#fff"><path d="M5 4.500h9.500v7H5zM15.500 6.500v3M1 1v2M4 1v2M.5 3.500h4v3h-4zM2.500 6.500V9H5"/><path d="M7 6h6v4H7z" fill="#fff" stroke="none"/></svg></button>
    <button aria-label="Volume"><svg width="16" height="14" fill="none" stroke="#fff"><path d="M.5 5h3L7 1.500v11L3.500 9h-3zM9 5q1.500 2 0 4M11 3q3 4 0 8M13 1.500q4 5.500 0 11"/></svg></button>
    <button class="lang">ENG</button>
    <button class="clock"><time>19:51</time><time>02-03-2025</time></button>
    <button class="notify" aria-label="Notifications"><svg width="18" height="18" fill="none" stroke="#fff" stroke-width="1.200"><path d="M10 13l-4 3v-3H1V1.500h15V9"/><path d="M15.500 10q-5.500 0-5 4 2 3 5.500.5-3-.5-.5-4.500z" fill="#fff" stroke="none"/></svg></button>
  </div>
</footer>
</body>
</html>
```
FILE: styles.css
```css
* { box-sizing: border-box; }
body { margin: 0; min-height: 100vh; display: flex; flex-direction: column; background: #000; font-family: "Open Sans", sans-serif; }
button { border: 0; padding: 0; margin: 0; background: none; font: inherit; color: inherit; display: flex; align-items: center; justify-content: center; }
svg { display: block; flex: none; }
.defs { position: absolute; }
fieldset { border: 0; margin: 0; padding: 0; min-width: 0; }
legend { padding: 0; }
a { color: inherit; text-decoration: none; }
input { min-width: 0; margin: 0; }

/* Player window */
.player { flex: 1; display: flex; flex-direction: column; border-top: 1px solid #222; border-left: 1px solid #222; }
.titlebar { height: 30px; display: flex; align-items: center; background: #fff; padding-left: 8px; gap: 6px; }
.titlebar h1 { margin: 0; font-size: 12px; font-weight: 400; color: #000; flex: 1; }
.window-buttons { display: flex; }
.window-buttons button { width: 45px; height: 30px; }
.window-buttons path { fill: none; stroke: #111; }
.menubar { height: 21px; display: flex; align-items: center; gap: 14px; padding-left: 8px; background: #fff; font-size: 12px; }
.menubar button { display: block; }
.menubar u { text-underline-offset: 2px; }
.video { flex: 1; display: flex; background: #000; justify-content: center; }
.frame { width: 75%; max-width: 1019px; display: flex; flex-direction: column; font-family: Inter, sans-serif; font-size: 7px; margin-bottom: 1px; }

.mac-bar { height: 20px; display: flex; align-items: center; gap: 11px; padding: 0 10px 2px; color: #eee; background: linear-gradient(90deg, #230c19, #26101b 50%, #20040d); font-size: 8px; font-weight: 500; }
.mac-status { margin-left: auto; display: flex; align-items: center; gap: 10px; }
.mac-status time { margin-left: -2px; white-space: nowrap; }
.record { margin-right: 5px; }
.siri { margin-left: -8px; }

.browser { background: #323232; border-radius: 5px 5px 0 0; border-top: 1px solid #484848; border-bottom: 1px solid #000; color: #ddd; overflow: hidden; }
.tabs { height: 24px; display: flex; align-items: center; background: #1d1d1d; padding: 0 4px 0 12px; }
.tab { display: flex; align-items: center; gap: 4px; white-space: nowrap; height: 22px; }
.tab span { flex: 1; }
.first { width: 133px; margin-left: 15px; padding-right: 5px; }
.second { width: 142px; border-left: 1px solid #333; margin-left: 1px; padding: 0 9px 0 5px; height: 12px; }
.second span { mask-image: linear-gradient(90deg, #000 85%, transparent); }
.active { width: 138px; background: #323232; border-radius: 6px 6px 0 0; align-self: flex-end; padding: 0 6px 2px 4px; }
.new-tab { margin-left: 7px; }
.tab-search { width: 16px; height: 16px; border-radius: 5px; background: #353535; margin-left: auto; }
.address-row { height: 25px; display: flex; align-items: center; gap: 11px; padding: 0 10px 0 8px; }
.address { flex: 1; height: 20px; border-radius: 10px; background: #222; display: flex; align-items: center; gap: 7px; padding: 0 10px 0 2px; }
.site-info { width: 16px; height: 16px; border-radius: 50%; background: #383838; display: grid; place-items: center; }
.address input { flex: 1; border: 0; padding: 0; background: none; color: #eee; font: 8px Inter, sans-serif; }
.extensions { display: flex; align-items: center; gap: 11px; }
.extensions i { width: 1px; height: 10px; background: #555; }
.bookmarks { height: 21px; display: flex; align-items: center; gap: 12px; padding: 0 7px 1px; color: #ccc; }
.bookmarks a { display: flex; align-items: center; gap: 4px; }

/* Whiteboard */
.board { position: relative; flex: 1; background: #fefefe; border-radius: 0 0 5px 5px; overflow: hidden; font-family: Lato, sans-serif; color: #444; }
.drawing { position: absolute; inset: 0; width: 100%; height: 100%; }
.labels text { font-family: Lato, sans-serif; font-size: 17px; fill: #c51f22; }
.board-ui { position: relative; height: 100%; display: flex; flex-direction: column; align-items: flex-start; padding: 10px 9px 8px; }
.board-top { width: 100%; height: 22px; display: grid; grid-template-columns: 1fr auto 1fr; align-items: start; }
.soft { background: #e9e7f1; border-radius: 5px; }
.square { width: 22px; height: 21px; }
.tool-column p { margin: 7px 0 0; text-align: center; color: #aaa; font-size: 7px; line-height: 10px; }
.tools { width: 325px; height: 26px; display: flex; align-items: center; justify-content: space-between; padding: 0 3px; border-radius: 5px; background: #fff; box-shadow: 0 0 2px #ccc, 0 3px 8px #eee; }
.tools button { width: 21px; height: 21px; border-radius: 5px; position: relative; }
.tools i { width: 1px; height: 14px; margin: 0 2px; background: #eee; }
.tools sub { position: absolute; right: 2px; bottom: 2px; font-size: 5px; line-height: 6px; color: #999; }
.tools svg, .options svg, .board-footer button svg { width: 9px; height: 9px; fill: none; stroke: #333; stroke-linecap: round; stroke-linejoin: round; stroke-width: .8; }
.tools .selected, .options .selected { background: #dedbfd; }
.board-actions { display: flex; justify-content: flex-end; gap: 7px; }
.share, .library { height: 21px; border-radius: 5px; font-size: 8px; }
.share { width: 31px; background: #5b54d4; color: #fff; }
.library { width: 49px; gap: 4px; font-size: 7px; }
.panel { width: 119px; margin-top: 13px; padding: 7px 6px 7px 8px; border-radius: 5px; background: #fff; box-shadow: 0 0 2px #bbb, 0 3px 8px #eee; display: flex; flex-direction: column; gap: 7px; }
.panel legend, .panel label { display: block; font-size: 7px; line-height: 10px; }
.panel legend { margin-bottom: 2px; }
.swatches { display: flex; align-items: center; gap: 4px; height: 19px; }
.swatches button { width: 12px; height: 12px; border-radius: 2px; flex: none; }
.swatches i { width: 1px; height: 15px; background: #eee; margin: 0 2px; }
.swatches .current-colour { width: 15px; height: 15px; }
.swatches .picked { outline: 1px solid #897ab8; outline-offset: 1px; }
.black { background: #1c1c1c; } .red { background: #dc2c2c; } .green { background: #29953b; } .blue { background: #1764bd; } .orange { background: #eb8200; }
.options { display: flex; gap: 5px; }
.options button { width: 19px; height: 19px; border-radius: 4px; background: #efeef5; font-size: 9px; }
.bold svg { stroke-width: 1.300; }
.opacity { height: 23px; }
.opacity input { display: block; appearance: none; width: 105px; height: 9px; background: linear-gradient(#0067f5, #0067f5) center / 100% 5px no-repeat; border-radius: 3px; }
.opacity input::-webkit-slider-thumb { appearance: none; width: 9px; height: 9px; border-radius: 50%; background: #0069ff; }
.board-footer { width: 100%; display: flex; align-items: center; gap: 6px; margin-top: auto; }
.zoom, .history { height: 21px; display: flex; align-items: center; justify-content: space-between; padding: 0 6px; font-size: 8px; }
.zoom { width: 78px; } .history { width: 42px; }
.shield { margin-left: auto; margin-right: 6px; }

/* Playback controls */
.controls { height: 52px; background: linear-gradient(#fafafa, #efefef 8px); color: #000; font-size: 12px; }
.seek-row { height: 19px; display: flex; align-items: center; gap: 16px; padding: 0 5px 0 8px; line-height: 19px; }
.seek { flex: 1; appearance: none; height: 9px; border-radius: 3px; background: linear-gradient(90deg, #2881d2 21.7%, transparent 21.7%), linear-gradient(#bbb, #d5d5d5); }
.seek::-webkit-slider-thumb { appearance: none; width: 1px; height: 1px; }
.button-row { display: flex; align-items: center; gap: 14px; padding: 1px 2px 0 4px; }
.button-row button { width: 24px; height: 24px; background: #e1e1e1; border: 1px solid #adadad; }
.button-row button svg { width: 18px; height: 18px; fill: #6b6b6b; }
.button-row .pause { width: 30px; height: 30px; }
.button-row .pause svg { height: 20px; }
.group { display: flex; gap: 2px; }
.volume { margin-left: auto; display: flex; align-items: flex-end; gap: 6px; }
.volume text { font-size: 10px; fill: #777; }

/* Editor strip showing between player and taskbar */
.editor-status { height: 10px; overflow: hidden; display: flex; align-items: flex-end; background: #181818; color: #bbb; font-size: 10px; line-height: 18px; white-space: nowrap; }
.editor-status span { height: 18px; display: flex; flex: none; align-items: center; gap: 4px; }
.editor-status .remote { width: 28px; background: #0078d4; justify-content: center; margin-right: 6px; }
.branch { width: 45px; } .sync { width: 23px; } .rocket { width: 25px; } .launch { width: 88px; }
.editor-status .problems { flex: 1; }
.blame { width: 108px; } .commit { width: 104px; }
.editor-status .find { width: 28px; background: #37373d; justify-content: center; margin-right: 7px; }
.cursor { width: 70px; } .spaces { width: 54px; } .encoding { width: 40px; } .eol { width: 36px; } .language { width: 71px; } .live { width: 59px; } .copilot { width: 26px; } .prettier { width: 60px; } .bell { width: 24px; }

/* Taskbar */
.taskbar { height: 41px; display: flex; background: #1e2a3b; color: #fff; }
.start { width: 48px; }
.search { flex: 0 1 288px; min-width: 0; margin-top: 1px; display: flex; align-items: center; gap: 11px; padding: 0 6px 0 10px; background: #f3f3f3; border: 1px solid #bbb; }
.search input { flex: 1; width: 0; border: 0; padding: 0; background: none; font: 14px "Open Sans", sans-serif; color: #333; }
.search input::placeholder { color: #333; opacity: 1; }
.apps { display: flex; gap: 1px; }
.apps button { width: 48px; position: relative; }
.apps button:first-child { margin-right: 3px; }
.running::after { content: ""; position: absolute; left: 4px; right: 4px; bottom: 0; height: 2px; background: #b8b4ae; }
.multi::after { background: linear-gradient(90deg, #b8b4ae 31px, #555 31px, #555 32px, #8b8a88 32px); }
.current.running { background: #4d5665; }
.current.running::after { left: 0; right: 0; }
.tray { margin-left: auto; display: flex; gap: 9px; padding-right: 4px; font-size: 12px; }
.weather { gap: 8px; font-size: 14px; margin-right: 14px; }
.weather text { font-size: 9px; fill: #fff; text-anchor: middle; }
.tray .clock { width: 66px; flex-direction: column; gap: 2px; font-size: 12px; line-height: 17px; }
.notify { width: 42px; justify-content: flex-start; padding-left: 4px; border-right: 1px solid #667; }
```
